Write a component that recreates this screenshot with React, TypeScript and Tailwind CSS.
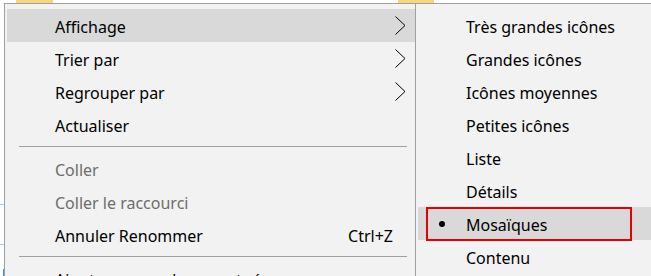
import React from "react";

type Item = { label: string; disabled?: boolean; shortcut?: string; sub?: boolean; active?: boolean } | "sep";

const mainItems: Item[] = [
  { label: "Affichage", sub: true, active: true },
  { label: "Trier par", sub: true },
  { label: "Regrouper par", sub: true },
  { label: "Actualiser" },
  "sep",
  { label: "Coller", disabled: true },
  { label: "Coller le raccourci", disabled: true },
  { label: "Annuler Renommer", shortcut: "Ctrl+Z" },
  "sep",
  { label: "Ajouter un emplacement réseau" },
];

const viewItems = [
  "Très grandes icônes",
  "Grandes icônes",
  "Icônes moyennes",
  "Petites icônes",
  "Liste",
  "Détails",
  "Mosaïques",
  "Contenu",
];

function Chevron() {
  return (
    <svg width="11" height="19" viewBox="0 0 11 19" className="mr-[9px] shrink-0">
      <polyline points="0.5,0.5 10,9.5 0.5,18.5" fill="none" stroke="#000" strokeWidth="1" />
    </svg>
  );
}

export default function App() {
  return (
    <div className="relative w-[651px] h-[276px] overflow-hidden bg-white pt-[3px] flex font-['Noto_Sans',sans-serif] text-[16px] text-black">
      {/* desktop bits peeking out behind the menus */}
      <span className="absolute left-[16px] top-0 w-[37px] h-[3px] bg-[#f6d67e]" />
      <span className="absolute left-[398px] top-0 w-[36px] h-[3px] bg-[#f6d67e]" />

      <div className="relative w-[4px] shrink-0">
        <span className="absolute left-0 top-[201px] w-[4px] h-px bg-[#99d1ff]" />
        <span className="absolute left-0 top-[241px] w-[4px] h-px bg-[#99d1ff]" />
        <span className="absolute left-[3px] top-[266px] w-px h-[10px] bg-[#3c8fd6]" />
      </div>

      <div className="w-[412px] shrink-0 bg-[#f2f2f2] border-l border-t border-r border-[#a0a0a0] pt-[5px] pl-[2px]">
        {mainItems.map((it, i) =>
          it === "sep" ? (
            <div key={i} className="h-[11px] flex items-center pl-[12px] pr-[8px]">
              <div className="h-px w-full bg-[#a0a0a0]" />
            </div>
          ) : (
            <div
              key={i}
              className={`h-[33px] flex items-center pl-[48px] ${it.active ? "bg-[#d9d9d9]" : ""} ${
                it.disabled ? "text-[#6d6d6d]" : ""
              }`}
            >
              <span className="flex-1 whitespace-nowrap pt-[2px]">{it.label}</span>
              {it.shortcut && <span className="mr-[22px] pt-[2px]">{it.shortcut}</span>}
              {it.sub && <Chevron />}
            </div>
          )
        )}
      </div>

      <div className="relative flex-1 bg-[#f2f2f2] border-t border-[#a0a0a0] pt-[5px] pl-[2px]">
        {viewItems.map((label) => {
          const sel = label === "Mosaïques";
          return (
            <div key={label} className={`h-[33px] flex items-center pl-[21px] ${sel ? "bg-[#d9d9d9]" : ""}`}>
              <span className="w-[27px] shrink-0 flex items-center">
                {sel && <span className="w-[6px] h-[6px] rounded-full bg-black" />}
              </span>
              <span className="whitespace-nowrap pt-[2px]">{label}</span>
            </div>
          );
        })}
        <div className="absolute left-[10px] top-[203px] w-[206px] h-[34px] border-2 border-[#e60000]" />
      </div>
    </div>
  );
}
